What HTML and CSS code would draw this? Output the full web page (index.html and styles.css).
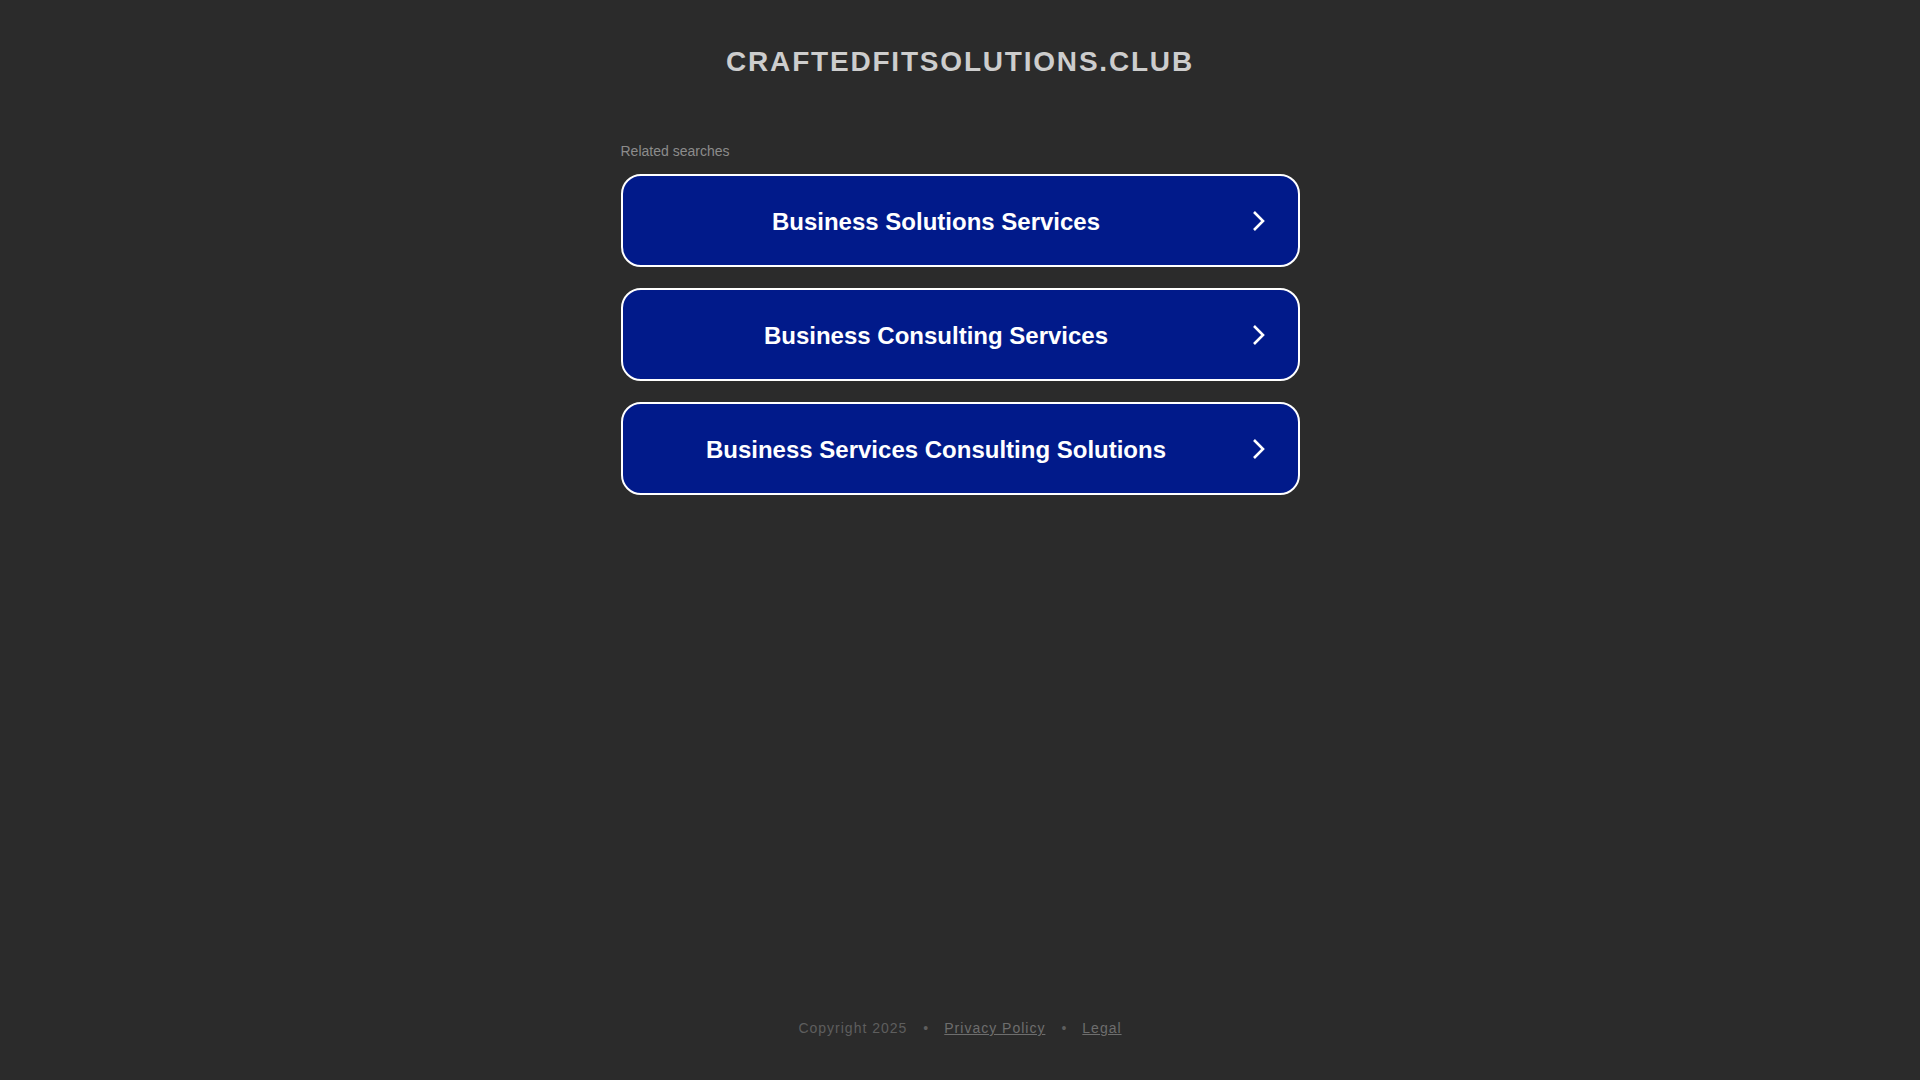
FILE: index.html
```html
<!DOCTYPE html>
<html lang="en">
<head>
<meta charset="utf-8">
<title>craftedfitsolutions.club</title>
<link rel="stylesheet" href="styles.css">
</head>
<body>
<div class="page">
  <header class="site-header">
    <h1 class="domain">craftedfitsolutions.club</h1>
  </header>
  <main class="content">
    <p class="related-label">Related searches</p>
    <ul class="links">
      <li><a class="search-link" href="#"><span class="link-text">Business Solutions Services</span><svg class="chev" viewBox="0 0 24 24" width="24" height="24"><path d="M7 3 L16 12 L7 21" fill="none" stroke="#fff" stroke-width="2.6"/></svg></a></li>
      <li><a class="search-link" href="#"><span class="link-text">Business Consulting Services</span><svg class="chev" viewBox="0 0 24 24" width="24" height="24"><path d="M7 3 L16 12 L7 21" fill="none" stroke="#fff" stroke-width="2.6"/></svg></a></li>
      <li><a class="search-link" href="#"><span class="link-text">Business Services Consulting Solutions</span><svg class="chev" viewBox="0 0 24 24" width="24" height="24"><path d="M7 3 L16 12 L7 21" fill="none" stroke="#fff" stroke-width="2.6"/></svg></a></li>
    </ul>
  </main>
  <footer class="site-footer">
    <span class="copy">Copyright 2025</span>
    <span class="sep">•</span>
    <a class="foot-link" href="#">Privacy Policy</a>
    <span class="sep">•</span>
    <a class="foot-link" href="#">Legal</a>
  </footer>
</div>
</body>
</html>
```

FILE: styles.css
```css
html, body {
  margin: 0;
  padding: 0;
  background: #2b2b2b;
}

body {
  font-family: "Liberation Sans", Arial, sans-serif;
}

.page {
  min-height: 100vh;
  display: flex;
  flex-direction: column;
  align-items: center;
  box-sizing: border-box;
  padding-top: 46px;
  padding-bottom: 44px;
}

.site-header {
  text-align: center;
}

.domain {
  margin: 0;
  font-size: 28px;
  line-height: 32px;
  font-weight: bold;
  text-transform: uppercase;
  letter-spacing: 1.8px;
  color: #cdcdcd;
}

.content {
  width: 679px;
  margin-top: 65px;
}

.related-label {
  margin: 0 0 15px 0;
  font-size: 14px;
  line-height: 16px;
  color: #8c8c8c;
}

.links {
  list-style: none;
  margin: 0;
  padding: 0;
  display: flex;
  flex-direction: column;
  gap: 21px;
}

.search-link {
  display: flex;
  align-items: center;
  box-sizing: border-box;
  height: 93px;
  border: 2px solid #ffffff;
  border-radius: 20px;
  background: #011a8a;
  color: #ffffff;
  text-decoration: none;
  padding: 0 27px 0 3px;
}

.link-text {
  flex: 1;
  text-align: center;
  font-size: 24px;
  font-weight: bold;
  line-height: 28px;
  padding-top: 2px;
}

.chev {
  display: block;
  flex: none;
}

.site-footer {
  margin-top: auto;
  font-size: 14px;
  line-height: 16px;
  letter-spacing: 1px;
  color: #5e5e5e;
  display: flex;
  align-items: baseline;
}

.sep {
  margin: 0 15px 0 16px;
  color: #5e5e5e;
}

.foot-link {
  color: #6e6e6e;
  text-decoration: underline;
}
```
